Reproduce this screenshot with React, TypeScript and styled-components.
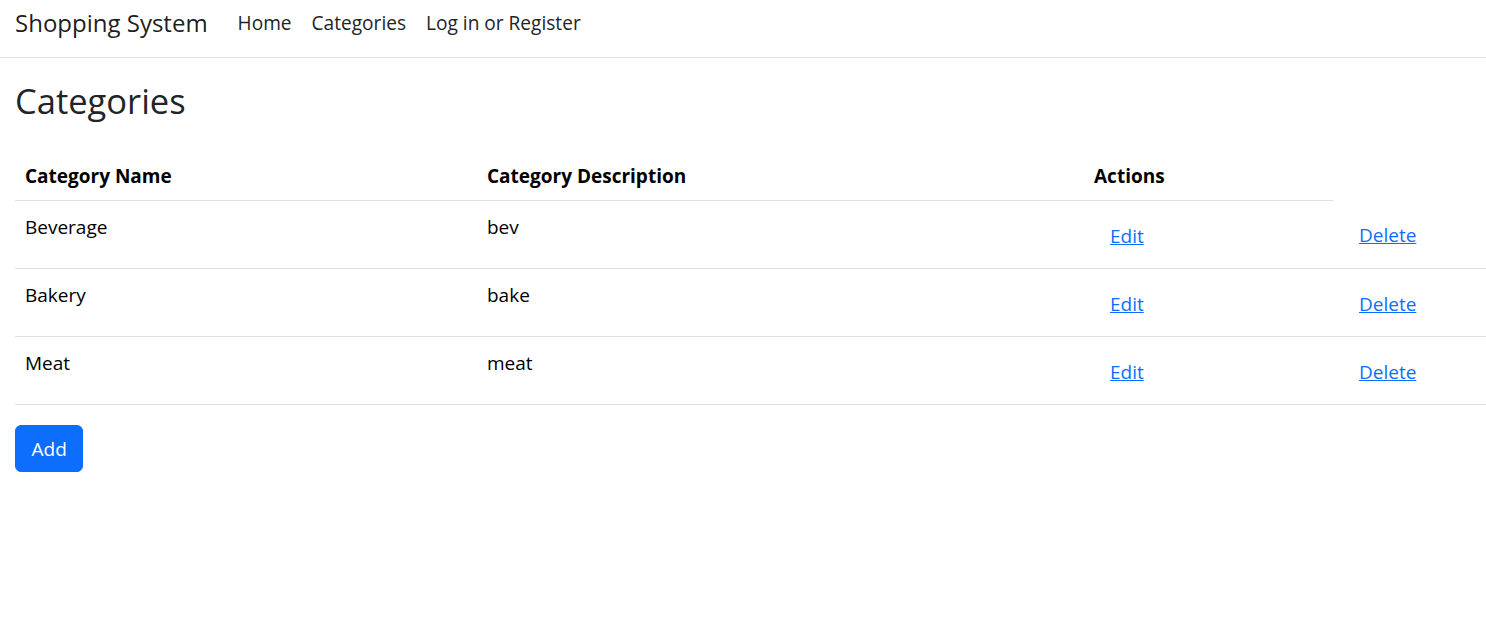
import React from "react";
import styled, { createGlobalStyle } from "styled-components";

const Global = createGlobalStyle`
  html, body { margin: 0; padding: 0; background: #fff; }
  body {
    font-family: "Open Sans", "Noto Sans", sans-serif;
    font-size: 19px;
    line-height: 30px;
    color: #212529;
  }
  * { box-sizing: border-box; }
`;

const NavBar = styled.nav`
  height: 58px;
  display: flex;
  align-items: center;
  padding: 4px 15px 16px;
  border-bottom: 1px solid #dee2e6;
`;

const Brand = styled.a`
  font-size: 24px;
  line-height: 38px;
  color: rgba(0, 0, 0, 0.9);
  text-decoration: none;
  margin-right: 20px;
  white-space: nowrap;
`;

const NavList = styled.ul`
  display: flex;
  list-style: none;
  margin: 0;
  padding: 0;
`;

const NavLink = styled.a`
  display: block;
  padding: 0 10px;
  color: #212529;
  font-size: 19.1px;
  text-decoration: none;
  white-space: nowrap;
`;

const Main = styled.main`
  padding: 19px 0 0 15px;
`;

const Title = styled.h2`
  margin: 0 0 25px;
  font-size: 34.5px;
  line-height: 48px;
  font-weight: 500;
  color: #212529;
`;

const Table = styled.table`
  width: 100%;
  table-layout: fixed;
  border-collapse: collapse;
  margin-bottom: 20px;
  color: #000;
  vertical-align: top;
`;

const HeadCell = styled.th`
  padding: 11px 10px 9px;
  text-align: left;
  font-weight: 700;
  border-bottom: 1px solid #dee2e6;
`;

const Cell = styled.td`
  padding: 11px 10px 9px;
  border-bottom: 1px solid #dee2e6;
  vertical-align: top;
`;

const LinkButton = styled.a`
  display: inline-block;
  vertical-align: top;
  padding: 7.5px 15px;
  border: 1px solid transparent;
  background: none;
  font: inherit;
  line-height: 30px;
  color: #0d6efd;
  text-decoration: underline;
  cursor: pointer;
`;

const PrimaryButton = styled.button`
  display: inline-block;
  padding: 7.5px 15.5px;
  border: 1px solid #0d6efd;
  border-radius: 6px;
  background: #0d6efd;
  color: #fff;
  font: inherit;
  line-height: 30px;
  cursor: pointer;
`;

const rows = [
  { name: "Beverage", desc: "bev" },
  { name: "Bakery", desc: "bake" },
  { name: "Meat", desc: "meat" },
];

export default function App() {
  return (
    <>
      <Global />
      <NavBar>
        <Brand href="#">Shopping System</Brand>
        <NavList>
          <li><NavLink href="#">Home</NavLink></li>
          <li><NavLink href="#">Categories</NavLink></li>
          <li><NavLink href="#">Log in or Register</NavLink></li>
        </NavList>
      </NavBar>
      <Main>
        <Title>Categories</Title>
        <Table>
          <colgroup>
            <col style={{ width: 462 }} />
            <col style={{ width: 607 }} />
            <col style={{ width: 249 }} />
            <col style={{ width: 153 }} />
          </colgroup>
          <thead>
            <tr>
              <HeadCell>Category Name</HeadCell>
              <HeadCell>Category Description</HeadCell>
              <HeadCell>Actions</HeadCell>
            </tr>
          </thead>
          <tbody>
            {rows.map((r) => (
              <tr key={r.name}>
                <Cell>{r.name}</Cell>
                <Cell>{r.desc}</Cell>
                <Cell>
                  <LinkButton href="#">Edit</LinkButton>
                </Cell>
                <Cell>
                  <LinkButton as="button" type="button">Delete</LinkButton>
                </Cell>
              </tr>
            ))}
          </tbody>
        </Table>
        <PrimaryButton type="button">Add</PrimaryButton>
      </Main>
    </>
  );
}
